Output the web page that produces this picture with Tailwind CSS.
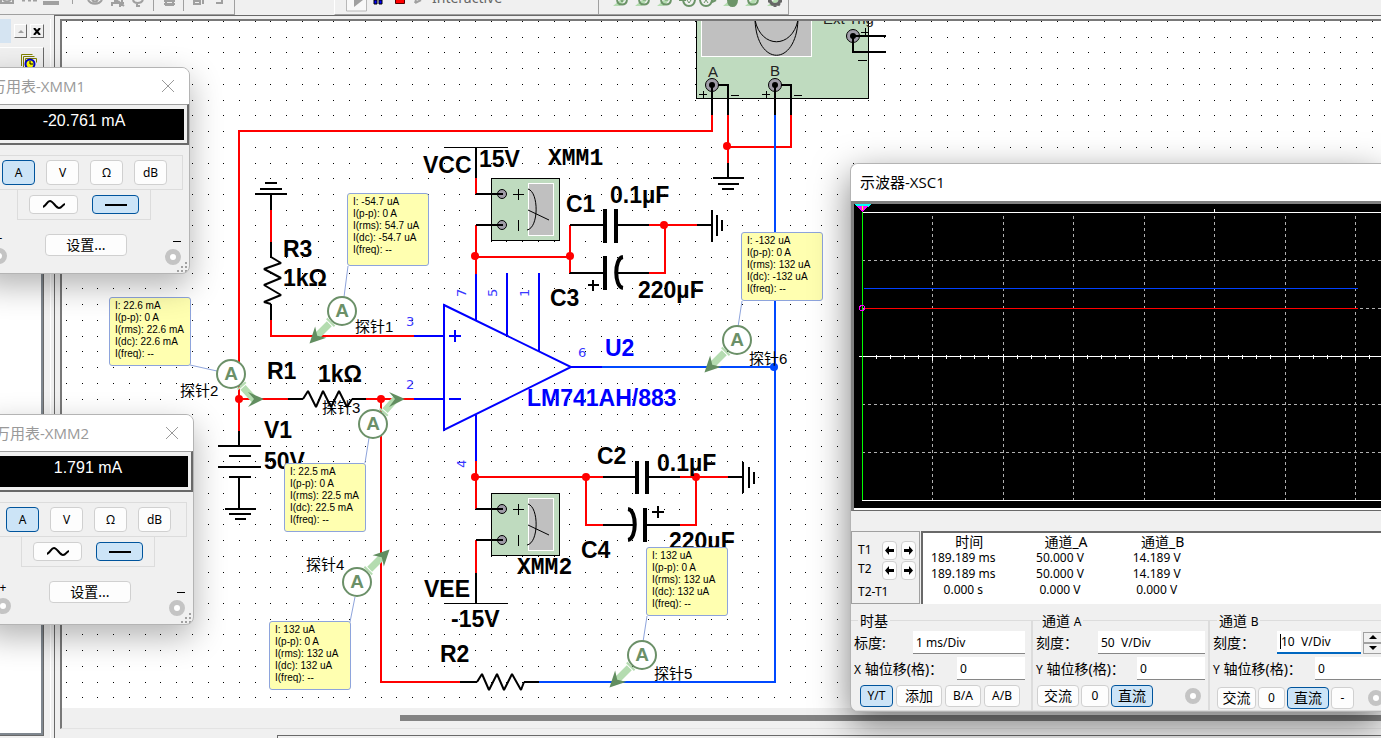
<!DOCTYPE html>
<html lang="zh-CN">
<head>
  <meta charset="UTF-8" />
  <meta name="viewport" content="width=device-width, initial-scale=1" />
  <title>LM741 仿真</title>
  <script src="https://cdn.jsdelivr.net/npm/@tailwindcss/browser@4"></script>
</head>

<body class="relative h-screen overflow-hidden flex flex-col bg-[#f0f0f0] text-black font-['Noto_Sans','Noto_Sans_CJK_SC',sans-serif]">

  <!-- Toolbar -->
  <header class="h-[15px] flex-none flex overflow-hidden">
    <div class="w-[235px] border-b border-r border-[#a0a0a0]">
      <svg width="234" height="14" fill="none" stroke="#a0a0a0" stroke-width="2">
        <path d="M1 0v3h12V0M3 0q4 3 8 0" />
        <path d="M22 0h3M28 0h3M33 0h4" stroke-width="3" />
        <path d="M44 2h14v2H44z" />
        <path d="M88 0c3 5 11 5 14 0M92 0q3 3 6 0" />
        <path d="M112 6v-3h3V0h2v3h3v4M122 0v6M124 3h-4M118 1l6 5" />
        <path d="M133 0c1 4 8 4 10 0M137 2v4h3" />
        <path d="M166 0h7v5h-7zM164 1h11M164 4h11" />
        <path d="M194 1h6v3h-6zM203 0v4M216 3h6V0" />
        <path d="M72.500 0v4M153.500 0v11M183.500 0v11" stroke-width="1" />
      </svg>
    </div>
    <div class="w-[99px]"></div>
    <div class="w-[265px] flex border-b border-r border-l border-b-[#a0a0a0] border-r-[#a0a0a0] border-l-white">
      <svg class="flex-none" width="97" height="14">
        <path d="M11.500 0v11h20V0" fill="#f8f8f8" stroke="#b8b8b8" />
        <path d="M19 0h9L19 7z" fill="#a0a0a0" />
        <path d="M39 0h3v4h-3zM44 0h3v4h-3z" fill="#00f" stroke="#000" stroke-width="1" />
        <path d="M60.500 0v3.500h9V0" fill="red" stroke="#500" />
        <path d="M80 3l6-3M81 0l-1 3" fill="none" stroke="#a0a0a0" stroke-width="2" />
      </svg>
      <span class="-mt-[9px] h-[14px] text-sm leading-[14px] text-[#666] font-['Noto_Sans',sans-serif]">Interactive</span>
    </div>
    <div class="w-[190px] border-b border-r border-[#a0a0a0]">
      <svg width="188" height="14" fill="none" stroke="#6c9468" stroke-width="2">
        <path d="M14 6l7-6h5l-5 6zM36 6l7-6h5l-5 6zM58 6l7-6h5l-5 6zM124 6l7-6h5l-5 6zM146 6l7-6h5l-5 6zM168 6l7-6h5l-5 6z" fill="#b4dcb0" stroke="none" />
        <path d="M18 0c1 6 9 6 10 0M40 0c1 6 9 6 10 0M62 0c1 6 9 6 10 0M84 0c1 8 11 8 12 0M80 0h7M101 0c1 8 11 8 12 0M113 2l4-2M149 0c1 6 9 6 10 0" />
        <path d="M22 0l1 2 1-2M44 0h3M66 0h3M88 0l2 3 2-3M105 3l2-3 2 3" stroke-width="1" />
        <path d="M129 0c0 8 9 8 9 0z" fill="#6c9468" />
        <path d="M171 0c1 6 9 6 10 0M169 1h3M180 1h3M172 5l2-2M178 3l3 2M176 4v3" stroke="#666" stroke-width="3" />
      </svg>
    </div>
  </header>

  <main class="flex-1 min-h-0 flex">
    <!-- Docked design toolbox -->
    <aside class="w-[54px] flex-none flex pt-1">
      <div class="w-11 flex flex-col">
        <div class="h-7 flex items-start gap-[3px]">
          <span class="w-[11px] h-6 bg-[#d5e4f2]"></span>
          <button class="mt-[5px] w-[13px] h-[14px] border border-white border-r-[#696969] border-b-[#696969] flex items-center justify-center" aria-label="up">
            <svg width="6" height="4"><path d="M0 4l3-3 3 3z" fill="#a0a0a0" /></svg>
          </button>
          <button class="mt-[5px] w-[14px] h-[14px] border border-white border-r-[#696969] border-b-[#696969] flex items-center justify-center" aria-label="close">
            <svg width="8" height="7"><path d="M1 0l6 7M7 0L1 7" stroke="#000" stroke-width="2" /></svg>
          </button>
        </div>
        <div class="h-[60px] border-t border-t-white border-r border-r-[#696969]">
          <svg class="ml-[21px] mt-[6px]" width="16" height="16">
            <path d="M.5 12V.5h11M2.500 14V2.500h11M4.500 15V4.500h11v4" fill="none" stroke="#808000" />
            <circle cx="9" cy="10" r="4.500" fill="#ff0" stroke="#00c" stroke-width="2" />
            <path d="M9 7v3h3" fill="none" stroke="#000" />
          </svg>
        </div>
        <div class="flex-1 mr-px mb-[3px] bg-white border-r-2 border-b-2 border-[#808890] outline outline-[#696969]"></div>
      </div>
      <div class="w-[7px] border-r border-white"></div>
    </aside>

    <!-- Workspace -->
    <section class="flex-1 min-w-0 flex flex-col border-l border-t border-[#696969] pl-[5px] pt-[3px]">
      <div class="flex-1 min-h-0 flex flex-col border-l-2 border-t-2 border-[#787878] border-b border-b-[#e3e3e3]">
        <div class="relative flex-1 min-h-0 overflow-hidden bg-white">
          <svg id="sheet" class="w-full h-full" fill="none" font-family="Liberation Sans, Noto Sans CJK SC, sans-serif">
            <defs>
              <g id="meter">
                <rect x=".5" y=".5" width="68" height="62" fill="#bfdbbf" stroke="#000" />
                <circle cx="11" cy="16" r="4.500" fill="#a09ca8" stroke="#000" />
                <circle cx="11" cy="47" r="4.500" fill="#a09ca8" stroke="#000" />
                <path d="M-15 16h27M-15 47h27" stroke="#000" stroke-width="2" />
                <path d="M22 16.500h11M27.500 11v11M27.500 42v11" stroke="#000" />
                <rect x="37.500" y="5.500" width="25" height="52" fill="#c0c0c0" stroke="#fff" />
                <path d="M37 11c11 3 11 39-1 41M37 32l21 10" stroke="#000" />
              </g>
              <g id="probe">
                <circle r="14" fill="#fff" stroke="#6b9068" stroke-width="2" />
                <text y="6" text-anchor="middle" font-size="19" font-weight="bold" fill="#6b9068">A</text>
              </g>
              <g id="shaft" stroke="#b4dcb0">
                <path d="M0 15v2" stroke-width="11" />
                <path d="M0 18V36" stroke-width="7" />
              </g>
              <path id="head" d="M-8-7L8 0-8 8-2 0z" fill="#628e60" />
              <path id="tip" d="M0 46L-8 30 0 35 8 30z" fill="#628e60" />
            </defs>
            <g transform="translate(-62 -21)">
              <path id="dots" stroke="#000" shape-rendering="crispEdges" />

              <!-- Oscilloscope symbol -->
              <rect x="696.500" y="10" width="172" height="88.500" fill="#bfdbbf" stroke="#000" />
              <rect x="701.500" y="10" width="110" height="46.500" fill="#c0c0c0" stroke="#fff" />
              <path d="M755 20c6 29 37 29 43 0M755 20c2 47 41 47 43 0" stroke="#000" />
              <g fill="#a09ca8" stroke="#000">
                <circle cx="712" cy="85" r="6.500" /><circle cx="775" cy="85" r="6.500" /><circle cx="853" cy="36" r="6.500" />
              </g>
              <g fill="#000">
                <circle cx="712" cy="85" r="3" /><circle cx="775" cy="85" r="3" /><circle cx="853" cy="36" r="3" />
              </g>
              <path d="M699 94.500h8M703.500 91v8M762 94.500h8M766.500 91v8M861 32.500h8M865.500 28v8M731 95.500h8M794 95.500h8M858 60.500h9" stroke="#000" />
              <g fill="#222" font-size="15">
                <text x="708" y="77">A</text>
                <text x="770" y="76">B</text>
                <text x="823" y="24">Ext Trig</text>
              </g>

              <!-- Net: red -->
              <g stroke="#f00" stroke-width="2" shape-rendering="crispEdges">
                <path d="M239 431V131H712V115M728 115V163M791 115V147H728" />
                <path d="M271 210V242M271 320V336H414M239 399H288M366 399H414M381 399V682H460" />
                <path d="M476 178V194M476 225V274M476 257H570M570 225V273M649 225H697M665 225V273H649" />
                <path d="M476 461V509M476 477H603M586 477V525H603M680 477H728M696 477V525H680M476 540V573" />
              </g>
              <!-- Net: output -->
              <path d="M602 367H775M539 682H775V115" stroke="#0048ff" stroke-width="2" shape-rendering="crispEdges" />

              <!-- Black leads -->
              <g stroke="#000" stroke-width="2" shape-rendering="crispEdges">
                <path d="M712 85V115M718 85H728V115M775 85V115M781 85H791V115M886 36H853V52H886" />
                <path d="M728 163V178M713 178H744M718 184H739M722 189H734" />
                <path d="M265 183H277M260 189H282M255 194H287M271 194V210M271 242V257M271 304V320" />
                <path d="M288 399H303M352 399H366M460 682H477M524 682H539" />
                <path d="M239 431V446M218 446H261M229 456H251M218 467H261M229 477H251M239 477V508M225 509H256M229 514H251M235 519H246" />
                <path d="M476 147V178M476 573V604" />
                <path d="M570 225H603M618 225H649M570 273H603M618 273H649M697 225H712M712 210V242M717 215V236M722 220V231" />
                <path d="M603 477H636M648 477H680M603 525H634M647 525H680M728 477H743M743 462V493M749 467V488M754 472V484" />
                <path d="M588 285H599M593 280V291M652 512H664M658 506V518" />
              </g>
              <path d="M444 147.500H508M444 603.500H508" stroke="#000" />
              <path d="M605 209V243M616 209V243M605 256V290M637 461V494M647 461V494M645 508V542" stroke="#000" stroke-width="4" />
              <path d="M623 257C614 258 614 287 623 288M628 509C637 510 637 539 628 540" stroke="#000" stroke-width="4" />

              <!-- Resistors -->
              <g stroke="#000" stroke-width="2" stroke-linejoin="bevel">
                <path d="M271 257L281 263 264 269 281 278 264 285 281 295 264 302 271 304" />
                <path d="M303 399L308 391 316 407 323 391 331 407 339 391 347 407 352 399" />
                <path d="M477 682L482 674 489 690 497 674 504 690 512 674 521 690 524 682" />
              </g>

              <!-- Op-amp -->
              <path d="M444 305L571 367 444 430zM414 336H444M414 399H444M571 367H602M476 274V320M507 273V335M539 273V351M476 415V461M449 336H461M455 330V342M449 399H461" stroke="#00f" stroke-width="2" />
              <g fill="#3838ff" font-size="13" font-family="DejaVu Sans, sans-serif">
                <text x="406" y="326">3</text>
                <text x="406" y="389">2</text>
                <text x="578" y="357">6</text>
                <text transform="translate(466 297) rotate(-90)">7</text>
                <text transform="translate(497 297) rotate(-90)">5</text>
                <text transform="translate(529 297) rotate(-90)">1</text>
                <text transform="translate(466 468) rotate(-90)">4</text>
              </g>

              <use href="#meter" x="491" y="178" />
              <use href="#meter" x="491" y="493" />

              <!-- Junctions -->
              <g fill="#f00">
                <circle cx="239" cy="399" r="4" /><circle cx="381" cy="399" r="4" /><circle cx="475" cy="256" r="4" />
                <circle cx="570" cy="256" r="4" /><circle cx="664" cy="225" r="4" /><circle cx="727" cy="146" r="4" />
                <circle cx="475" cy="477" r="4" /><circle cx="586" cy="477" r="4" /><circle cx="696" cy="477" r="4" />
              </g>
              <circle cx="774" cy="367" r="4" fill="#0048ff" />

              <!-- Component labels -->
              <g fill="#000" font-size="23" font-weight="bold">
                <text x="423" y="173">VCC</text>
                <text x="479" y="167">15V</text>
                <text x="566" y="212">C1</text>
                <text x="610" y="203">0.1µF</text>
                <text x="550" y="306">C3</text>
                <text x="638" y="298">220µF</text>
                <text x="283" y="257">R3</text>
                <text x="283" y="286">1kΩ</text>
                <text x="267" y="379">R1</text>
                <text x="318" y="382">1kΩ</text>
                <text x="264" y="438">V1</text>
                <text x="264" y="469">50V</text>
                <text x="597" y="464">C2</text>
                <text x="657" y="471">0.1µF</text>
                <text x="581" y="558">C4</text>
                <text x="669" y="549">220µF</text>
                <text x="424" y="597">VEE</text>
                <text x="451" y="627">-15V</text>
                <text x="440" y="662">R2</text>
                <text x="605" y="356" fill="#00f">U2</text>
                <text x="527" y="406" fill="#00f">LM741AH/883</text>
                <text x="548" y="165" font-family="Liberation Mono, monospace">XMM1</text>
                <text x="517" y="574" font-family="Liberation Mono, monospace">XMM2</text>
              </g>

              <!-- Probes -->
              <path d="M348 266L344 297M190 365L217 371M365 463L369 438M350 622L355 597M647 616L643 642M742 301L738 327" stroke="#8ea4dc" />
              <g transform="translate(342 311) rotate(45)"><use href="#shaft" /><use href="#tip" /></g>
              <use href="#probe" x="342" y="311" />
              <use href="#shaft" transform="translate(231 374) rotate(-42)" />
              <use href="#head" x="256" y="399" />
              <use href="#probe" x="231" y="374" />
              <use href="#shaft" transform="translate(373 424) rotate(-138)" />
              <use href="#head" x="397" y="399" />
              <use href="#probe" x="373" y="424" />
              <g transform="translate(357 582) rotate(-135)"><use href="#shaft" /><use href="#tip" /></g>
              <use href="#probe" x="357" y="582" />
              <g transform="translate(642 655) rotate(45)"><use href="#shaft" /><use href="#tip" /></g>
              <use href="#probe" x="642" y="655" />
              <g transform="translate(737 340) rotate(45)"><use href="#shaft" /><use href="#tip" /></g>
              <use href="#probe" x="737" y="340" />
              <g fill="#000" font-size="15">
                <text x="355" y="332">探针1</text>
                <text x="180" y="396">探针2</text>
                <text x="322" y="413">探针3</text>
                <text x="306" y="570">探针4</text>
                <text x="654" y="679">探针5</text>
                <text x="749" y="364">探针6</text>
              </g>
            </g>
          </svg>
          <div id="notes" class="font-['Liberation_Sans',sans-serif]"></div>
        </div>
        <div class="h-5 flex-none flex items-center bg-[#f0f0f0]">
          <div class="ml-[338px] flex-1 h-[6px] bg-[#838383]"></div>
        </div>
      </div>
      <div class="mt-[6px] ml-[217px] h-[3px] flex-none border-t border-l border-[#696969]"></div>
    </section>
  </main>

  <!-- Multimeter XMM1 -->
  <div class="absolute -left-5 top-[67px] w-[210px] h-[207px] flex flex-col overflow-hidden rounded-lg border border-[#b4b4b4] bg-[#f0f0f0] shadow-[0_12px_32px_rgba(0,0,0,0.3)]">
    <div class="h-9 flex-none flex items-center justify-between bg-white pl-[10px] pr-[14px]">
      <h2 class="text-[15px] leading-5 text-[#999] whitespace-nowrap font-['Open_Sans','Noto_Sans_CJK_SC',sans-serif]">万用表-XMM1</h2>
      <button aria-label="关闭"><svg width="14" height="14"><path d="M1 1l12 12M13 1L1 13" stroke="#999" /></svg></button>
    </div>
    <div class="h-[41px] flex-none border-t border-[#a0a0a0] border-r-2 border-b-2 border-r-[#696969] border-b-[#696969] bg-[#f0f0f0] p-1 pl-[3px] pr-[3px]">
      <div class="h-[31px] bg-black text-white text-center text-base leading-6 font-['Liberation_Sans',sans-serif]">-20.761 mA</div>
    </div>
    <div class="mt-[10px] mr-[6px] h-[35px] flex-none flex items-center justify-end gap-[11px] pr-[15px] border border-[#dcdcdc] text-xs">
      <button class="w-[33px] h-[25px] rounded border border-[#00549c] bg-[#cce4f7]">A</button>
      <button class="w-[33px] h-[25px] rounded border border-[#d0d0d0] bg-[#fdfdfd]">V</button>
      <button class="w-[33px] h-[25px] rounded border border-[#d0d0d0] bg-[#fdfdfd]">Ω</button>
      <button class="w-[33px] h-[25px] rounded border border-[#d0d0d0] bg-[#fdfdfd]">dB</button>
    </div>
    <div class="ml-9 w-[134px] h-[30px] flex-none flex items-center justify-between px-[11px] border border-t-0 border-[#dcdcdc]">
      <button class="w-[49px] h-[19px] rounded border border-[#d0d0d0] bg-[#fdfdfd] flex items-center justify-center" aria-label="交流"><svg width="22" height="9"><path d="M0 7C4 5 4 1 7 1s6 7 9 7 3-3 6-4" fill="none" stroke="#000" stroke-width="2" /></svg></button>
      <button class="w-[47px] h-[19px] rounded border border-[#00549c] bg-[#cce4f7] flex items-center justify-center" aria-label="直流"><span class="w-[22px] h-[2px] bg-black"></span></button>
    </div>
    <div class="mt-[14px] flex-1 flex items-start justify-between pl-[10px] pr-2">
      <div class="w-4 flex flex-col items-center text-xs leading-[10px]">+<span class="mt-1 w-4 h-4 rounded-full border-[5px] border-[#c4c4c4] bg-white"></span></div>
      <button class="w-[82px] h-[22px] rounded border border-[#d0d0d0] bg-[#fdfdfd] text-sm leading-5">设置...</button>
      <div class="w-4 flex flex-col items-end"><span class="mt-[7px] mb-[7px] w-2 h-px bg-black"></span><span class="w-4 h-4 rounded-full border-[5px] border-[#c4c4c4] bg-white"></span></div>
    </div>
    <svg class="absolute right-0 bottom-0" width="12" height="12" fill="#a0a0a0"><path d="M0 9h2v2H0zM4 9h2v2H4zM4 5h2v2H4zM8 9h2v2H8zM8 5h2v2H8zM8 1h2v2H8z" /></svg>
  </div>

  <!-- Multimeter XMM2 -->
  <div class="absolute -left-4 top-[414px] w-[210px] h-[211px] flex flex-col overflow-hidden rounded-lg border border-[#b4b4b4] bg-[#f0f0f0] shadow-[0_12px_32px_rgba(0,0,0,0.3)]">
    <div class="h-9 flex-none flex items-center justify-between bg-white pl-[10px] pr-[14px]">
      <h2 class="text-[15px] leading-5 text-[#999] whitespace-nowrap font-['Open_Sans','Noto_Sans_CJK_SC',sans-serif]">万用表-XMM2</h2>
      <button aria-label="关闭"><svg width="14" height="14"><path d="M1 1l12 12M13 1L1 13" stroke="#999" /></svg></button>
    </div>
    <div class="h-[41px] flex-none border-t border-[#a0a0a0] border-r-2 border-b-2 border-r-[#696969] border-b-[#696969] bg-[#f0f0f0] p-1 pl-[3px] pr-[3px]">
      <div class="h-[31px] bg-black text-white text-center text-base leading-6 font-['Liberation_Sans',sans-serif]">1.791 mA</div>
    </div>
    <div class="mt-[10px] mr-[6px] h-[35px] flex-none flex items-center justify-end gap-[11px] pr-[15px] border border-[#dcdcdc] text-xs">
      <button class="w-[33px] h-[25px] rounded border border-[#00549c] bg-[#cce4f7]">A</button>
      <button class="w-[33px] h-[25px] rounded border border-[#d0d0d0] bg-[#fdfdfd]">V</button>
      <button class="w-[33px] h-[25px] rounded border border-[#d0d0d0] bg-[#fdfdfd]">Ω</button>
      <button class="w-[33px] h-[25px] rounded border border-[#d0d0d0] bg-[#fdfdfd]">dB</button>
    </div>
    <div class="ml-9 w-[134px] h-[30px] flex-none flex items-center justify-between px-[11px] border border-t-0 border-[#dcdcdc]">
      <button class="w-[49px] h-[19px] rounded border border-[#d0d0d0] bg-[#fdfdfd] flex items-center justify-center" aria-label="交流"><svg width="22" height="9"><path d="M0 7C4 5 4 1 7 1s6 7 9 7 3-3 6-4" fill="none" stroke="#000" stroke-width="2" /></svg></button>
      <button class="w-[47px] h-[19px] rounded border border-[#00549c] bg-[#cce4f7] flex items-center justify-center" aria-label="直流"><span class="w-[22px] h-[2px] bg-black"></span></button>
    </div>
    <div class="mt-[14px] flex-1 flex items-start justify-between pl-[10px] pr-2">
      <div class="w-4 flex flex-col items-center pt-[2px] text-xs leading-[10px]">+<span class="mt-[5px] w-4 h-4 rounded-full border-[5px] border-[#c4c4c4] bg-white"></span></div>
      <button class="w-[82px] h-[22px] rounded border border-[#d0d0d0] bg-[#fdfdfd] text-sm leading-5">设置...</button>
      <div class="w-4 flex flex-col items-end"><span class="mt-[11px] mb-[7px] w-2 h-px bg-black"></span><span class="w-4 h-4 rounded-full border-[5px] border-[#c4c4c4] bg-white"></span></div>
    </div>
    <svg class="absolute right-0 bottom-0" width="12" height="12" fill="#a0a0a0"><path d="M0 9h2v2H0zM4 9h2v2H4zM4 5h2v2H4zM8 9h2v2H8zM8 5h2v2H8zM8 1h2v2H8z" /></svg>
  </div>

  <!-- Oscilloscope XSC1 -->
  <div class="absolute left-[850px] right-0 top-[163px] flex flex-col overflow-hidden rounded-l-lg border border-r-0 border-[#b4b4b4] bg-[#f0f0f0] shadow-[0_12px_36px_rgba(0,0,0,0.5)]">
    <h2 class="h-[37px] pl-[9px] bg-white text-[15px] leading-[37px] font-['Open_Sans','Noto_Sans_CJK_SC',sans-serif]">示波器-XSC1</h2>
    <div class="border-t-[3px] border-l-[3px] border-[#808080] border-b border-b-[#696969]">
      <svg id="screen" class="block w-full h-[306px] bg-black border-b-2 border-white" fill="none" shape-rendering="crispEdges">
        <path id="grid" stroke="#b0b0b0" stroke-dasharray="3 3" />
        <path id="axis" stroke="#fff" />
        <path d="M8.500 8V296" stroke="#0f0" />
        <path d="M10 84.500H504" stroke="#0040ff" />
        <path d="M10 104.500H504" stroke="#f00" />
        <path d="M0 0h17l-3 3H3z" fill="#0ff" />
        <path d="M2 2h13L8.500 8z" fill="#f0f" />
        <path d="M8 2v4" stroke="#ff0" />
        <circle cx="8" cy="104" r="2.500" stroke="#f0f" />
      </svg>
    </div>
    <div class="mt-5 h-[73px] flex">
      <div class="w-[69px] flex-none flex flex-col border border-[#a0a0a0] pl-[6px] pt-2 text-xs">
        <div class="h-[20px] flex items-center gap-1">
          <span class="w-5 leading-4">T1</span>
          <button class="w-[15px] h-[19px] rounded border border-[#d0d0d0] bg-[#fdfdfd] flex items-center justify-center" aria-label="T1 左移"><svg width="9" height="9"><path d="M4 0v3h5v3H4v3L0 4.500z" /></svg></button>
          <button class="w-[15px] h-[19px] rounded border border-[#d0d0d0] bg-[#fdfdfd] flex items-center justify-center" aria-label="T1 右移"><svg width="9" height="9"><path d="M5 0v3H0v3h5v3l4-4.500z" /></svg></button>
        </div>
        <div class="h-[21px] flex items-center gap-1">
          <span class="w-5 leading-4 pb-1">T2</span>
          <button class="w-[15px] h-[19px] rounded border border-[#d0d0d0] bg-[#fdfdfd] flex items-center justify-center" aria-label="T2 左移"><svg width="9" height="9"><path d="M4 0v3h5v3H4v3L0 4.500z" /></svg></button>
          <button class="w-[15px] h-[19px] rounded border border-[#d0d0d0] bg-[#fdfdfd] flex items-center justify-center" aria-label="T2 右移"><svg width="9" height="9"><path d="M5 0v3H0v3h5v3l4-4.500z" /></svg></button>
        </div>
        <span class="mt-[3px] leading-4">T2-T1</span>
      </div>
      <div class="ml-px flex-1 bg-white border-t-2 border-l-2 border-[#696969]">
        <table class="w-[290px] table-fixed text-center text-xs leading-4">
          <tr class="text-sm leading-[17px]"><th class="font-normal pr-1">时间</th><th class="font-normal pr-1">通道_A</th><th class="font-normal pr-1">通道_B</th></tr>
          <tr><td class="pr-4">189.189 ms</td><td class="pr-4">50.000 V</td><td class="pr-4">14.189 V</td></tr>
          <tr><td class="pr-4">189.189 ms</td><td class="pr-4">50.000 V</td><td class="pr-4">14.189 V</td></tr>
          <tr><td class="pr-4">0.000 s</td><td class="pr-4">0.000 V</td><td class="pr-4">0.000 V</td></tr>
        </table>
      </div>
    </div>

    <div class="mt-[6px] h-[101px] flex text-xs whitespace-nowrap">
      <fieldset class="w-[182px] flex-none border-t border-r-2 border-b border-[#dcdcdc] px-[3px]">
        <legend class="ml-1 px-[2px] text-sm leading-[21px]">时基</legend>
        <div class="h-[23px] flex items-center justify-between">
          <label for="tb-scale" class="text-sm leading-5">标度:</label>
          <input id="tb-scale" class="w-[112px] h-[23px] mr-[3px] px-[3px] bg-white border-b border-[#868686]" value="1 ms/Div" />
        </div>
        <div class="mt-[3px] h-[23px] flex items-center justify-between">
          <label for="tb-x" class="text-sm leading-5"><span class="text-xs">X</span> 轴位移(格)：</label>
          <input id="tb-x" class="w-[68px] h-[23px] mr-[3px] px-[3px] bg-white border-b border-[#868686]" value="0" />
        </div>
        <div class="mt-[5px] flex gap-[3px] pl-[6px]">
          <button class="w-[33px] h-[22px] rounded border border-[#00549c] bg-[#cce4f7]">Y/T</button>
          <button class="w-[46px] h-[22px] rounded border border-[#d0d0d0] bg-[#fdfdfd] text-sm leading-5">添加</button>
          <button class="w-[36px] h-[22px] rounded border border-[#d0d0d0] bg-[#fdfdfd]">B/A</button>
          <button class="w-[36px] h-[22px] rounded border border-[#d0d0d0] bg-[#fdfdfd]">A/B</button>
        </div>
      </fieldset>
      <fieldset class="w-[177px] flex-none border-t border-r-2 border-b border-[#dcdcdc] px-[3px]">
        <legend class="ml-[4px] px-[2px] text-sm leading-[21px]">通道 <span class="text-xs">A</span></legend>
        <div class="h-[23px] flex items-center justify-between">
          <label for="a-scale" class="text-sm leading-5">刻度：</label>
          <input id="a-scale" class="w-[107px] h-[23px] px-[3px] bg-white border-b border-[#868686]" value="50  V/Div" />
        </div>
        <div class="mt-[3px] h-[23px] flex items-center justify-between">
          <label for="a-y" class="text-sm leading-5"><span class="text-xs">Y</span> 轴位移(格)：</label>
          <input id="a-y" class="w-[68px] h-[23px] px-[3px] bg-white border-b border-[#868686]" value="0" />
        </div>
        <div class="mt-[5px] flex items-center gap-[2px] pl-px">
          <button class="w-[42px] h-[22px] rounded border border-[#d0d0d0] bg-[#fdfdfd] text-sm leading-5">交流</button>
          <button class="w-7 h-[22px] rounded border border-[#d0d0d0] bg-[#fdfdfd]">0</button>
          <button class="w-[42px] h-[22px] rounded border border-[#00549c] bg-[#cce4f7] text-sm leading-5">直流</button>
          <span class="ml-auto mr-1 w-4 h-4 rounded-full border-[5px] border-[#c4c4c4] bg-white"></span>
        </div>
      </fieldset>
      <fieldset class="w-[190px] flex-none border-t border-b border-[#dcdcdc] px-[3px]">
        <legend class="ml-[4px] px-[2px] text-sm leading-[21px]">通道 <span class="text-xs">B</span></legend>
        <div class="h-[23px] flex items-center">
          <label for="b-scale" class="w-16 text-sm leading-5">刻度：</label>
          <div class="flex bg-white border-b-2 border-[#0067c0]">
            <span class="ml-[3px] my-[3px] w-px bg-black"></span>
            <input id="b-scale" class="w-20 h-[21px] bg-white outline-none" value="10  V/Div" />
          </div>
          <div class="ml-[2px] w-[20px] flex flex-col">
            <button class="h-[11px] border border-[#a0a0a0] flex items-center justify-center" aria-label="增大"><svg width="8" height="4"><path d="M0 4l4-4 4 4z" /></svg></button>
            <button class="h-[11px] border border-[#a0a0a0] flex items-center justify-center" aria-label="减小"><svg width="8" height="4"><path d="M0 0l4 4 4-4z" /></svg></button>
          </div>
        </div>
        <div class="mt-[3px] h-[23px] flex items-center">
          <label for="b-y" class="w-[102px] text-sm leading-5"><span class="text-xs">Y</span> 轴位移(格)：</label>
          <input id="b-y" class="w-[68px] h-[23px] px-[3px] bg-white border-b border-[#868686]" value="0" />
        </div>
        <div class="mt-[7px] flex items-center gap-[2px] pl-1">
          <button class="w-[39px] h-[22px] rounded border border-[#d0d0d0] bg-[#fdfdfd] text-sm leading-5">交流</button>
          <button class="w-[27px] h-[22px] rounded border border-[#d0d0d0] bg-[#fdfdfd]">0</button>
          <button class="w-[42px] h-[22px] rounded border border-[#00549c] bg-[#cce4f7] text-sm leading-5">直流</button>
          <button class="w-[23px] h-[22px] rounded border border-[#d0d0d0] bg-[#fdfdfd]">-</button>
          <span class="ml-3 w-4 h-4 rounded-full border-[5px] border-[#c4c4c4] bg-white"></span>
        </div>
      </fieldset>
    </div>
  </div>

  <script>
    // Sheet grid dots
    const pitch = 15.73;
    let dots = '';
    for (let j = 0; j < 44; j++) {
      for (let i = 0; 66 + i * pitch < window.innerWidth; i++) {
        dots += `M${Math.round(66 + i * pitch)} ${Math.round(21 + j * pitch)}.5h1`;
      }
    }
    document.getElementById('dots').setAttribute('d', dots);

    // Probe readouts
    const probes = [
      { x: 285, y: 172, h: 73, rows: ['I: -54.7 uA', 'I(p-p): 0 A', 'I(rms): 54.7 uA', 'I(dc): -54.7 uA', 'I(freq): --'] },
      { x: 47, y: 276, h: 69, rows: ['I: 22.6 mA', 'I(p-p): 0 A', 'I(rms): 22.6 mA', 'I(dc): 22.6 mA', 'I(freq): --'] },
      { x: 222, y: 442, h: 69, rows: ['I: 22.5 mA', 'I(p-p): 0 A', 'I(rms): 22.5 mA', 'I(dc): 22.5 mA', 'I(freq): --'] },
      { x: 207, y: 600, h: 69, rows: ['I: 132 uA', 'I(p-p): 0 A', 'I(rms): 132 uA', 'I(dc): 132 uA', 'I(freq): --'] },
      { x: 584, y: 526, h: 69, rows: ['I: 132 uA', 'I(p-p): 0 A', 'I(rms): 132 uA', 'I(dc): 132 uA', 'I(freq): --'] },
      { x: 679, y: 211, h: 69, rows: ['I: -132 uA', 'I(p-p): 0 A', 'I(rms): 132 uA', 'I(dc): -132 uA', 'I(freq): --'] },
    ];
    const notes = document.getElementById('notes');
    probes.forEach(p => {
      const note = document.createElement('div');
      note.className = 'absolute w-[82px] pl-[5px] pt-[2px] rounded-[3px] border border-[#8ea4dc] bg-[#ffffb0] text-[10px] leading-3 whitespace-nowrap';
      note.style.left = p.x + 'px';
      note.style.top = p.y + 'px';
      note.style.height = p.h + 'px';
      p.rows.forEach(row => {
        const line = document.createElement('p');
        line.textContent = row;
        note.appendChild(line);
      });
      notes.appendChild(note);
    });

    // Oscilloscope graticule, drawn past the right edge and clipped by the svg
    const width = window.innerWidth;
    let grid = '';
    let axis = `M8 8.500H${width}M8 296.500H${width}M5 152.500H${width}M360.500 5v4`;
    for (let n = 1; 8 + n * 70.5 < width; n++) {
      grid += `M${Math.floor(8 + n * 70.5) + 0.5} 12V296`;
    }
    [56.5, 104.5, 200.5, 248.5].forEach(y => { grid += `M8 ${y}H${width}`; });
    for (let n = 1; 8 + n * 14.1 < width; n++) {
      const x = Math.floor(8 + n * 14.1) + 0.5;
      axis += n % 5 ? `M${x} 151v4` : `M${x} 150v7`;
    }
    document.getElementById('grid').setAttribute('d', grid);
    document.getElementById('axis').setAttribute('d', axis);
  </script>
</body>
</html>
